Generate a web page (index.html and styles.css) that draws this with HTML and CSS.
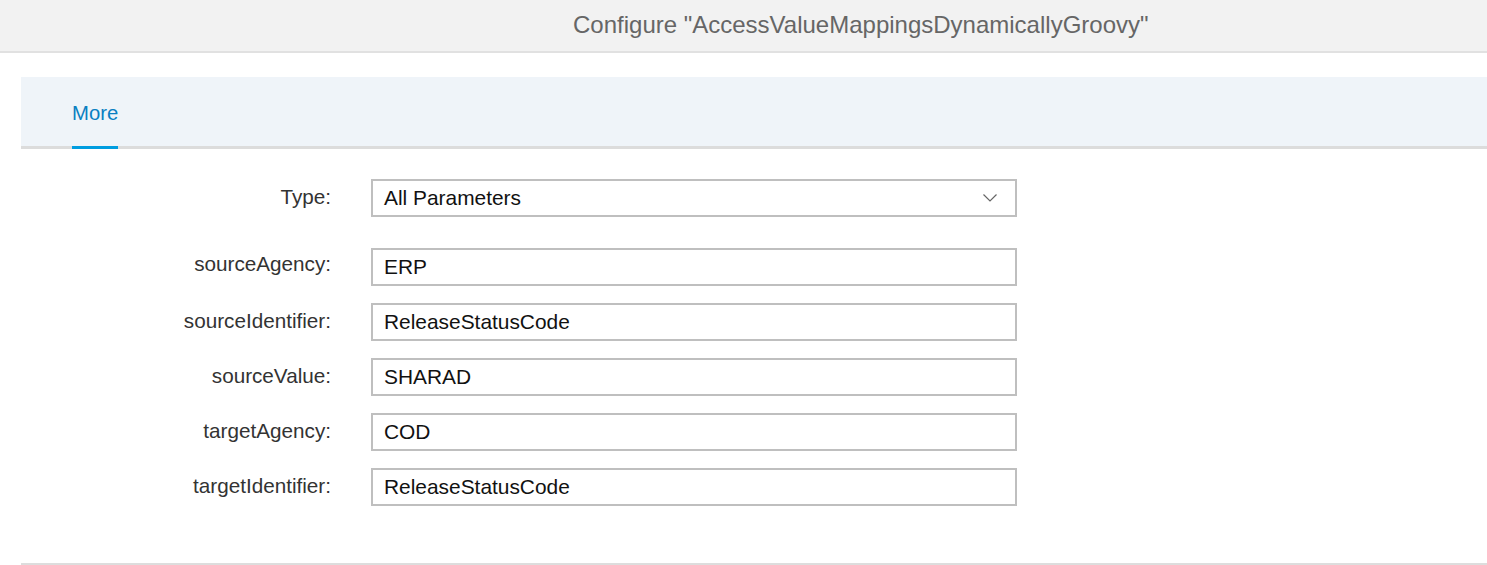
FILE: index.html
```html
<!DOCTYPE html>
<html>
<head>
<meta charset="utf-8">
<link rel="stylesheet" href="styles.css">
</head>
<body>
<header class="header">
  <h1 class="title">Configure "AccessValueMappingsDynamicallyGroovy"</h1>
</header>
<main class="content">
  <nav class="tabbar">
    <div class="tab active">More</div>
  </nav>
  <form class="form">
    <label class="label">Type:</label>
    <div class="field select">
      <span>All Parameters</span>
      <svg class="chev" width="14" height="8" viewBox="0 0 14 8"><path d="M0.5 0.5 L7 7 L13.5 0.5" fill="none" stroke="#666" stroke-width="1.2"/></svg>
    </div>
    <label class="label first">sourceAgency:</label>
    <div class="field first">ERP</div>
    <label class="label">sourceIdentifier:</label>
    <div class="field">ReleaseStatusCode</div>
    <label class="label">sourceValue:</label>
    <div class="field">SHARAD</div>
    <label class="label">targetAgency:</label>
    <div class="field">COD</div>
    <label class="label">targetIdentifier:</label>
    <div class="field">ReleaseStatusCode</div>
  </form>
  <div class="footer-line"></div>
</main>
</body>
</html>
```
FILE: styles.css
```css
html, body {
  margin: 0;
  padding: 0;
  background: #fff;
  font-family: "Liberation Sans", Arial, sans-serif;
}
.header {
  height: 51px;
  background: #f2f2f2;
  border-bottom: 2px solid #e1e1e1;
  display: flex;
  align-items: center;
  padding-left: 573px;
}
.title {
  margin: 0 0 2px 0;
  font-size: 24px;
  font-weight: normal;
  color: #666;
  white-space: nowrap;
}
.content {
  padding-left: 21px;
}
.tabbar {
  margin-top: 24px;
  height: 69px;
  background: #eff4f9;
  border-bottom: 3px solid #dcdcdc;
  display: flex;
  padding-left: 51px;
}
.tab {
  font-size: 20.3px;
  color: #0a7fc2;
  display: flex;
  align-items: center;
  padding-top: 4px;
  margin-bottom: -3px;
}
.tab.active {
  border-bottom: 3px solid #009de0;
}
.form {
  display: grid;
  grid-template-columns: 310px 646px;
  column-gap: 40px;
  row-gap: 17px;
  padding-top: 30px;
  margin: 0;
}
.label {
  font-size: 20.7px;
  color: #333;
  text-align: right;
  align-self: center;
  margin-top: -3px;
}
.field.first {
  margin-top: 14px;
}
.label.first {
  margin-top: 8px;
}
.field {
  box-sizing: border-box;
  height: 38px;
  border: 2px solid #bfbfbf;
  padding-left: 11px;
  font-size: 20.9px;
  color: #111;
  display: flex;
  align-items: center;
  background: #fff;
}
.select {
  justify-content: space-between;
  padding-right: 18px;
}
.footer-line {
  margin-top: 57px;
  height: 2px;
  background: #dddddd;
}
```
